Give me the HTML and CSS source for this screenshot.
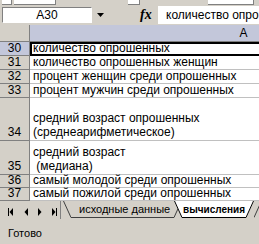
FILE: index.html
```html
<!DOCTYPE html>
<html lang="ru">
<head>
    <meta charset="UTF-8">
    <title>вычисления</title>
    <link rel="stylesheet" href="styles.css">
</head>
<body>
<div class="toolbar">
    <span class="tb-box tb-small"></span>
    <span class="tb-box tb-font"></span>
    <span class="tb-box tb-size"></span>
    <span class="tb-box tb-wide"></span>
</div>

<div class="formula-bar">
    <div class="name-box">A30</div>
    <div class="name-drop">
        <svg width="7" height="4" viewBox="0 0 7 4"><path d="M0 0h7L3.5 4z" fill="#000"/></svg>
    </div>
    <div class="fx">fx</div>
    <div class="formula-input"><span class="formula-text">количество опрошенных</span></div>
</div>

<div class="sheet">
    <div class="corner"></div>
    <div class="col-head active-head">A</div>

    <div class="rh active-head">30</div>
    <div class="cell active-cell">количество опрошенных</div>

    <div class="rh">31</div>
    <div class="cell">количество опрошенных женщин</div>

    <div class="rh">32</div>
    <div class="cell">процент женщин среди опрошенных</div>

    <div class="rh">33</div>
    <div class="cell">процент мужчин среди опрошенных</div>

    <div class="rh row-tall">34</div>
    <div class="cell row-tall">средний возраст опрошенных<br>(среднеарифметическое)</div>

    <div class="rh row-mid">35</div>
    <div class="cell row-mid">средний возраст<br>&nbsp;(медиана)</div>

    <div class="rh row-low">36</div>
    <div class="cell row-low">самый молодой среди опрошенных</div>

    <div class="rh row-low">37</div>
    <div class="cell row-low">самый пожилой среди опрошенных</div>
</div>

<div class="tabbar">
    <svg class="tab-nav" width="60" height="18" viewBox="0 0 60 18">
        <path d="M8 7h1v8H8z M13 7v8L9.5 11z" fill="#000"/>
        <path d="M28 7v8L24.5 11z" fill="#000"/>
        <path d="M38 7v8L41.5 11z" fill="#000"/>
        <path d="M52 7v8L55.5 11z M56 7h1v8h-1z" fill="#000"/>
    </svg>
    <div class="tabs">
        <div class="tab">
            <svg class="edge" width="8" height="17" viewBox="0 0 8 17"><path d="M0 0L8 16.5V0z" fill="#d4d0c8"/><path d="M0.5 0L8 16.5" stroke="#404040" fill="none"/></svg>
            <span class="tab-label">исходные данные</span>
            <svg class="edge" width="8" height="17" viewBox="0 0 8 17"><path d="M0 0V16.5L8 0z" fill="#d4d0c8"/><path d="M0 16.5L7.5 0" stroke="#404040" fill="none"/></svg>
        </div>
        <div class="tab tab-active">
            <svg class="edge" width="8" height="17" viewBox="0 0 8 17"><path d="M0 0L8 16.5V0z" fill="#fff"/><path d="M0.5 0L8 16.5" stroke="#000" fill="none"/></svg>
            <span class="tab-label">вычисления</span>
            <svg class="edge" width="8" height="17" viewBox="0 0 8 17"><path d="M0 0V16.5L8 0z" fill="#fff"/><path d="M0 16.5L7.5 0" stroke="#000" fill="none"/></svg>
        </div>
        <svg class="edge" width="8" height="17" viewBox="0 0 8 17"><path d="M0 16.5L7.5 0" stroke="#404040" fill="none"/></svg>
    </div>
</div>

<div class="status">Готово</div>
</body>
</html>
```

FILE: styles.css
```css
* {
    box-sizing: border-box;
}
body {
    margin: 0;
    width: 259px;
    height: 244px;
    overflow: hidden;
    background: #d4d0c8;
    color: #000;
    font-family: "Liberation Sans", Arial, sans-serif;
    font-size: 12px;
}

/* toolbar remains at the very top */
.toolbar {
    height: 5px;
    display: flex;
    gap: 2px;
    padding-left: 2px;
}
.tb-box {
    background: #fff;
    border-bottom: 1px solid #808080;
    border-right: 1px solid #808080;
}
.tb-small {
    width: 10px;
}
.tb-font {
    width: 42px;
}
.tb-size {
    width: 12px;
    margin-left: 70px;
}
.tb-wide {
    width: 46px;
    margin-left: 66px;
}

/* formula bar */
.formula-bar {
    height: 20px;
    display: flex;
    align-items: center;
}
.name-box {
    margin-left: 2px;
    width: 90px;
    height: 16px;
    background: #fff;
    border: 1px solid;
    border-color: #808080 #fff #fff #808080;
    display: flex;
    align-items: center;
    justify-content: center;
    line-height: 14px;
}
.name-drop {
    width: 16px;
    display: flex;
    justify-content: center;
    align-items: center;
}
.fx {
    margin-left: 32px;
    width: 18px;
    font-family: "Liberation Serif", "Times New Roman", serif;
    font-style: italic;
    font-weight: bold;
    font-size: 14px;
}
.formula-input {
    flex: 1;
    min-width: 0;
    height: 18px;
    padding-left: 8px;
    background: #fff;
    display: flex;
    align-items: center;
    overflow: hidden;
}
.formula-text {
    white-space: nowrap;
}

/* sheet grid */
.sheet {
    display: grid;
    grid-template-columns: 30px 428px;
    grid-template-rows: 17px 14px 14px 14px 14px 43px 34px 13px 13px;
}
.corner {
    background: #d4d0c8;
    border-right: 1px solid #808080;
    border-bottom: 1px solid #808080;
}
.col-head {
    display: flex;
    align-items: center;
    justify-content: center;
    border-bottom: 1px solid #808080;
    border-right: 1px solid #808080;
}
.rh {
    display: flex;
    align-items: flex-end;
    justify-content: center;
    background: #d4d0c8;
    border-right: 1px solid #808080;
    border-bottom: 1px solid #808080;
    line-height: 13px;
}
.active-head {
    background: #c3c7da;
}
.cell {
    display: flex;
    align-items: flex-end;
    padding: 0 3px 0 3px;
    background: #fff;
    border-bottom: 1px solid #c0c0c0;
    line-height: 13px;
    white-space: nowrap;
}
.row-tall,
.row-mid {
    line-height: 14px;
    padding-bottom: 1px;
}
.active-cell {
    border: 2px solid #000;
    border-right: 0;
    padding-left: 1px;
    line-height: 11px;
}

/* sheet tabs */
.tabbar {
    height: 18px;
    display: flex;
    align-items: flex-start;
}
.tab-nav {
    flex: none;
}
.tabs {
    display: flex;
    padding-left: 2px;
    border-left: 1px solid #808080;
    height: 18px;
}
.tab {
    display: flex;
    height: 17px;
}
.edge {
    display: block;
    flex: none;
}
.tab-label {
    display: flex;
    align-items: center;
    padding: 0 0 0 8px;
    width: 103px;
    background: #d4d0c8;
    border-bottom: 1px solid #404040;
    font-size: 11px;
    white-space: nowrap;
}
.tab-active {
    margin-left: -8px;
}
.tab-active .tab-label {
    width: auto;
    padding: 0 1px;
    background: #fff;
    border-bottom-color: #000;
    font-weight: bold;
    font-size: 10px;
}

/* status bar */
.status {
    height: 25px;
    display: flex;
    align-items: center;
    padding: 2px 0 0 8px;
    font-size: 11px;
}
```
